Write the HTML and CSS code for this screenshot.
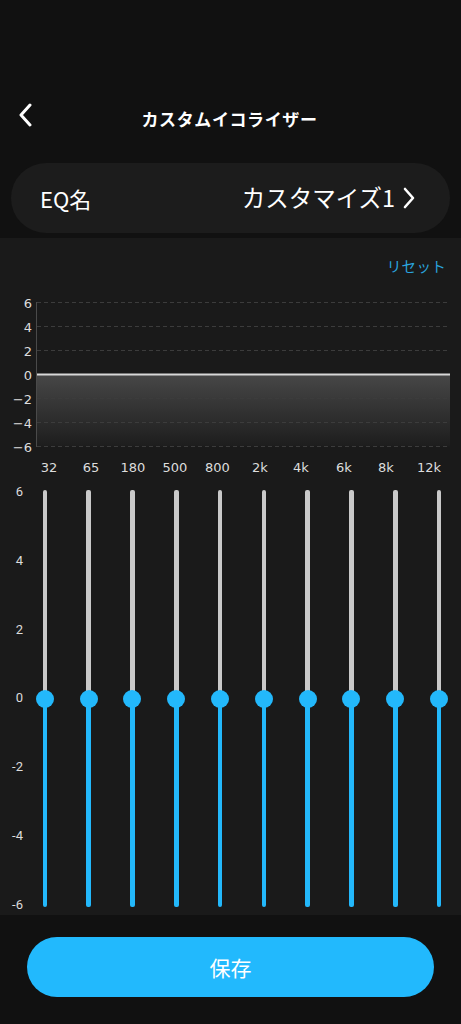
FILE: index.html
```html
<!DOCTYPE html>
<html lang="ja">
<head>
<meta charset="utf-8">
<link rel="stylesheet" href="styles.css">
</head>
<body>
<div class="screen">
  <header class="header">
    <svg class="back" width="16" height="24" viewBox="0 0 16 24"><path d="M12 2 L3 12 L12 22" fill="none" stroke="#fff" stroke-width="3" stroke-linecap="round" stroke-linejoin="round"/></svg>
    <h1 class="title">カスタムイコライザー</h1>
  </header>

  <div class="name-card">
    <span class="name-label">EQ名</span>
    <span class="name-value">カスタマイズ1
      <svg class="chev" width="14" height="22" viewBox="0 0 14 22"><path d="M3 2 L11 11 L3 20" fill="none" stroke="#fff" stroke-width="2.6" stroke-linecap="round" stroke-linejoin="round"/></svg>
    </span>
  </div>

  <section class="panel">
    <div class="reset-row"><span class="reset">リセット</span></div>

    <svg class="chart" width="461" height="200" viewBox="0 0 461 200">
      <defs>
        <linearGradient id="fillg" x1="0" y1="0" x2="0" y2="1">
          <stop offset="0" stop-color="#474747"/>
          <stop offset="1" stop-color="#1d1d1d"/>
        </linearGradient>
      </defs>
      <rect x="37" y="94.5" width="413" height="72" fill="url(#fillg)"/>
      <g stroke="#3c3c3c" stroke-width="1" stroke-dasharray="4 3">
        <line x1="37" y1="22.5" x2="450" y2="22.5"/>
        <line x1="37" y1="46.5" x2="450" y2="46.5"/>
        <line x1="37" y1="70.5" x2="450" y2="70.5"/>
        <line x1="37" y1="118.5" x2="450" y2="118.5"/>
        <line x1="37" y1="142.5" x2="450" y2="142.5"/>
        <line x1="37" y1="166.5" x2="450" y2="166.5"/>
      </g>
      <line x1="36.5" y1="22" x2="36.5" y2="167" stroke="#4a4a4a" stroke-width="1"/>
      <line x1="37" y1="94.5" x2="450" y2="94.5" stroke="#d8d8d8" stroke-width="2"/>
      <g class="ylab" text-anchor="end">
        <text x="32" y="27.5">6</text>
        <text x="32" y="51.5">4</text>
        <text x="32" y="75.5">2</text>
        <text x="32" y="99.5">0</text>
        <text x="32" y="123.5">−2</text>
        <text x="32" y="147.5">−4</text>
        <text x="32" y="171.5">−6</text>
      </g>
      <g class="xlab" text-anchor="middle">
        <text x="49" y="192">32</text>
        <text x="91" y="192">65</text>
        <text x="133" y="192">180</text>
        <text x="175" y="192">500</text>
        <text x="217.5" y="192">800</text>
        <text x="260" y="192">2k</text>
        <text x="301" y="192">4k</text>
        <text x="344" y="192">6k</text>
        <text x="386" y="192">8k</text>
        <text x="429" y="192">12k</text>
      </g>
    </svg>

    <div class="sliders">
      <div class="axis">
        <span>6</span><span>4</span><span>2</span><span>0</span><span>-2</span><span>-4</span><span>-6</span>
      </div>
      <div class="slider"><div class="track-top"></div><div class="thumb"></div><div class="track-bottom"></div></div>
      <div class="slider"><div class="track-top"></div><div class="thumb"></div><div class="track-bottom"></div></div>
      <div class="slider"><div class="track-top"></div><div class="thumb"></div><div class="track-bottom"></div></div>
      <div class="slider"><div class="track-top"></div><div class="thumb"></div><div class="track-bottom"></div></div>
      <div class="slider"><div class="track-top"></div><div class="thumb"></div><div class="track-bottom"></div></div>
      <div class="slider"><div class="track-top"></div><div class="thumb"></div><div class="track-bottom"></div></div>
      <div class="slider"><div class="track-top"></div><div class="thumb"></div><div class="track-bottom"></div></div>
      <div class="slider"><div class="track-top"></div><div class="thumb"></div><div class="track-bottom"></div></div>
      <div class="slider"><div class="track-top"></div><div class="thumb"></div><div class="track-bottom"></div></div>
      <div class="slider"><div class="track-top"></div><div class="thumb"></div><div class="track-bottom"></div></div>
    </div>
  </section>

  <div class="footer">
    <button class="save">保存</button>
  </div>
</div>
</body>
</html>
```

FILE: styles.css
```css
* { box-sizing: border-box; }
html, body {
  margin: 0;
  padding: 0;
  background: #111111;
}
body {
  width: 461px;
  height: 1024px;
  overflow: hidden;
  font-family: "Noto Sans CJK JP", "Noto Sans", sans-serif;
  color: #fff;
}
.screen {
  display: flex;
  flex-direction: column;
  padding-top: 96px;
}
.header {
  height: 44px;
  display: flex;
  align-items: center;
  justify-content: center;
  position: relative;
}
.back {
  position: absolute;
  left: 18px;
  top: 7px;
}
.title {
  margin: 0;
  font-size: 17px;
  font-weight: 700;
  letter-spacing: 0.6px;
  margin-left: -2px;
}
.name-card {
  margin: 23px 11px 0 11px;
  height: 70px;
  border-radius: 35px;
  background: #1c1c1c;
  display: flex;
  align-items: center;
  justify-content: space-between;
  padding: 0 34px 0 29px;
}
.name-label {
  font-size: 22px;
  line-height: 1;
}
.name-value {
  font-size: 23.5px;
  line-height: 1;
  display: flex;
  align-items: center;
  gap: 7px;
}
.chev { display: block; }
.panel {
  margin-top: 5px;
  height: 677px;
  background: #1a1a1a;
  display: flex;
  flex-direction: column;
  padding-top: 17px;
}
.reset-row {
  height: 20px;
  display: flex;
  justify-content: flex-end;
  align-items: center;
  padding-right: 15px;
}
.reset {
  font-size: 14.5px;
  color: #2aa4de;
  letter-spacing: 0.3px;
}
.chart {
  display: block;
  margin-top: 5px;
}
.ylab text, .xlab text {
  font-family: "DejaVu Sans", "Noto Sans", sans-serif;
  font-size: 13px;
  fill: #dddddd;
}
.sliders {
  margin-top: 10px;
  height: 417px;
  display: flex;
}
.axis {
  width: 23px;
  display: flex;
  flex-direction: column;
  justify-content: space-between;
  align-items: flex-end;
  margin: -7px 0;
}
.axis span {
  font-family: Roboto, "Noto Sans", sans-serif;
  font-size: 13px;
  line-height: 18px;
  color: #dcdcdc;
}
.slider {
  width: 43.8px;
  display: flex;
  flex-direction: column;
  align-items: center;
}
.track-top {
  width: 4.5px;
  flex: 1;
  background: #c9c9c9;
  border-radius: 2px 2px 0 0;
  margin-bottom: -9px;
}
.thumb {
  width: 18px;
  height: 18px;
  border-radius: 50%;
  background: #23b8fb;
  position: relative;
  z-index: 1;
}
.track-bottom {
  width: 4.5px;
  flex: 1;
  background: #23b8fb;
  border-radius: 0 0 2px 2px;
  margin-top: -9px;
}
.footer {
  padding: 22px 27px 0 27px;
}
.save {
  width: 407px;
  height: 60px;
  border: none;
  border-radius: 30px;
  background: #22b9fd;
  color: #fff;
  font-family: "Noto Sans CJK JP", sans-serif;
  font-size: 21px;
  display: flex;
  align-items: center;
  justify-content: center;
  padding: 0;
}
```
